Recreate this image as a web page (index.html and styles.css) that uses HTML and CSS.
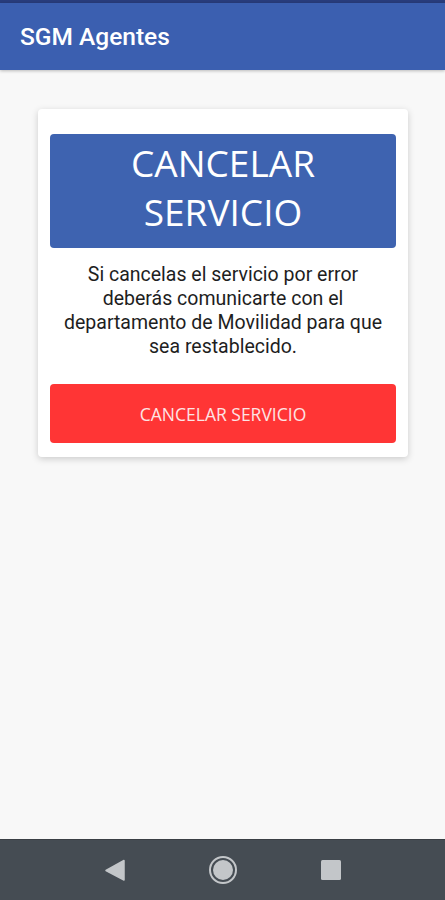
FILE: index.html
```html
<html>

<head>
  <meta name="viewport" content="width=device-width, initial-scale=1">
  <link rel="stylesheet" href="styles.css">
</head>

<body>
  <div class="statusbar"></div>
  <header class="appbar">SGM Agentes</header>

  <main class="content">
    <div class="card">
      <div class="banner">CANCELAR<br>SERVICIO</div>
      <p class="notice">
        Si cancelas el servicio por error deberás comunicarte con el departamento de Movilidad para que sea restablecido.
      </p>
      <button class="cancel">CANCELAR SERVICIO</button>
    </div>
  </main>

  <nav class="navbar">
    <svg class="nav-icon" width="30" height="30" viewBox="0 0 30 30">
      <path d="M24 5.5 L24 25 L6 15.5 Z" fill="#c3c6c9" stroke="#c3c6c9" stroke-width="1.5" stroke-linejoin="round" />
    </svg>
    <svg class="nav-icon" width="30" height="30" viewBox="0 0 30 30">
      <circle cx="15" cy="15" r="13" fill="none" stroke="#c3c6c9" stroke-width="2" />
      <circle cx="15" cy="15" r="10" fill="#c3c6c9" />
    </svg>
    <svg class="nav-icon" width="30" height="30" viewBox="0 0 30 30">
      <rect x="5" y="5" width="20" height="20" rx="1.5" fill="#c3c6c9" />
    </svg>
  </nav>
</body>

</html>
```

FILE: styles.css
```css
html,
body {
  margin: 0;
  height: 100%;
}

body {
  font-family: Roboto, "Noto Sans", sans-serif;
  background-color: #f8f8f8;
  display: flex;
  flex-direction: column;
}

.statusbar {
  height: 3px;
  background-color: #283c7c;
}

.appbar {
  height: 67px;
  box-sizing: border-box;
  padding: 0 20px 0 20px;
  display: flex;
  align-items: center;
  background-color: #3b5fb0;
  color: white;
  font-size: 24.5px;
  font-weight: 500;
  box-shadow: 0 1px 3px rgba(0, 0, 0, 0.25);
}

.content {
  flex: 1;
  padding: 39px 37px 0 38px;
}

.card {
  background-color: white;
  border-radius: 4px;
  box-shadow: 0 2px 7px rgba(0, 0, 0, 0.18);
  padding: 25px 12px 14px;
}

.banner {
  background-color: #3e63b0;
  border-radius: 4px;
  color: white;
  text-align: center;
  font-family: "Open Sans", sans-serif;
  font-size: 37px;
  line-height: 49px;
  padding: 4px 0 12px;
}

.notice {
  margin: 15px 0 25px;
  padding: 0 4px;
  text-align: center;
  font-size: 19.5px;
  line-height: 24px;
  color: #1e1e1e;
}

.cancel {
  display: block;
  width: 100%;
  height: 59px;
  border: none;
  border-radius: 4px;
  background-color: #ff3535;
  color: #fde4e4;
  font-family: "Open Sans", sans-serif;
  font-size: 17.5px;
}

.navbar {
  height: 60px;
  background-color: #454c53;
  border-top: 1px solid #3a3f44;
  display: flex;
  align-items: center;
  justify-content: center;
  gap: 78px;
  padding-left: 1px;
}
```
